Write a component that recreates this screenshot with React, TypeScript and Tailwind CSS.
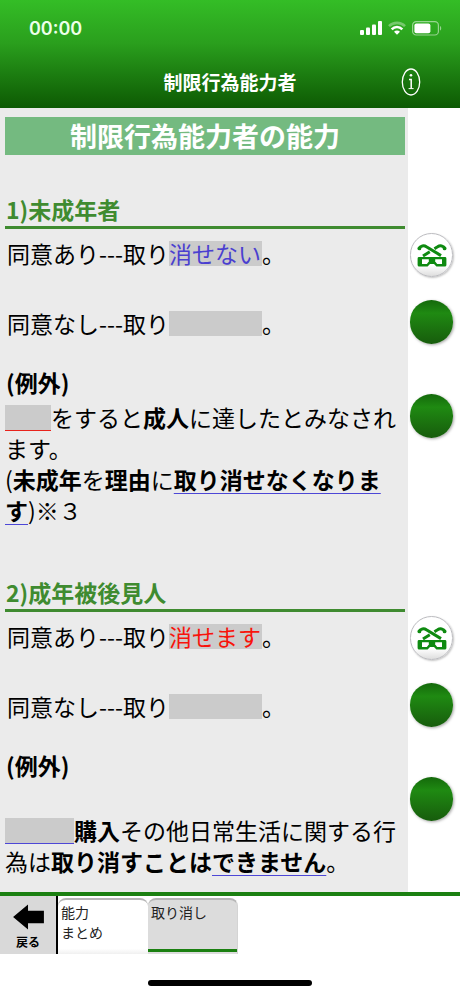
import type { ReactNode } from 'react';
import clsx from 'clsx';

function StatusIcons() {
  return (
    <div className="flex items-center gap-[6px] text-white">
      <svg width="22" height="14" viewBox="0 0 22 14" fill="currentColor">
        <rect x="0" y="9" width="4" height="5" rx="1" />
        <rect x="6" y="6.5" width="4" height="7.5" rx="1" />
        <rect x="12" y="3.5" width="4" height="10.5" rx="1" />
        <rect x="18" y="0" width="4" height="14" rx="1" />
      </svg>
      <svg width="18" height="14" viewBox="0 0 18 14" fill="none" stroke="currentColor" strokeWidth="2.6">
        <path d="M1 5.2C5.4 0.8 12.6 0.8 17 5.2" opacity="0.35" />
        <path d="M3.7 8.3C6.7 5.3 11.3 5.3 14.3 8.3" />
        <path d="M9 13.8L6 10.8C7.8 9.2 10.2 9.2 12 10.8Z" fill="currentColor" stroke="none" />
      </svg>
      <svg width="30" height="15" viewBox="0 0 30 15" fill="none">
        <rect x="0.6" y="0.6" width="25.8" height="13.4" rx="3.6" stroke="currentColor" strokeOpacity="0.5" strokeWidth="1.2" />
        <rect x="2.4" y="2.4" width="16" height="9.8" rx="2" fill="currentColor" />
        <path d="M28 5V9.6C29.6 9 29.6 5.6 28 5Z" fill="currentColor" fillOpacity="0.5" />
      </svg>
    </div>
  );
}

function InfoIcon() {
  return (
    <svg width="20" height="28" viewBox="0 0 20 28" fill="none" stroke="white">
      <ellipse cx="10" cy="14" rx="8.7" ry="13" strokeWidth="1.3" />
      <circle cx="10" cy="7.3" r="1.3" fill="white" stroke="none" />
      <path d="M8 11.6H10.2V20.4" strokeWidth="1.5" />
      <path d="M7.6 20.6H12.6" strokeWidth="1" />
    </svg>
  );
}

function GlassesIcon() {
  return (
    <svg width="30" height="23" viewBox="0 0 30 23" fill="none" stroke="#0e8a10">
      <path d="M2 4.6C3.4 1.6 7 1.2 9.4 2.8L24 11.6" strokeWidth="3" />
      <path d="M28 4.6C26.6 1.6 23 1.2 20.6 2.8L17.4 4.8" strokeWidth="3" />
      <path d="M12.8 7.8L6 12" strokeWidth="3" />
      <circle cx="2.4" cy="4.4" r="1.9" fill="#0e8a10" stroke="none" />
      <circle cx="27.6" cy="4.4" r="1.9" fill="#0e8a10" stroke="none" />
      <path
        d="M2 13H28Q29.4 13 29.4 14.4V21Q29.4 22.6 27.8 22.6H19.4L17 20H13L10.6 22.6H2.2Q0.6 22.6 0.6 21V14.4Q0.6 13 2 13Z"
        fill="#0e8a10"
        stroke="none"
      />
      <path d="M5 15.2H11.8V17.4L9.8 20H5Z" fill="white" stroke="none" />
      <path d="M18.2 15.2H25V20H20.2L18.2 17.4Z" fill="white" stroke="none" />
    </svg>
  );
}

function RoundButton({ open = false, label }: { open?: boolean; label: string }) {
  return (
    <button
      aria-label={label}
      className={clsx(
        'flex h-11 w-[43px] items-center justify-center rounded-full',
        open
          ? 'border border-[#bcbcc0] bg-linear-to-b from-white from-75% to-[#dedede] shadow-[1px_1px_2px_#c4c4c4]'
          : 'bg-linear-to-b from-[#14690b] via-[#1f8a12] via-30% to-[#175c0c] shadow-[1px_1px_3px_#a5a5a5]'
      )}
    >
      {open && <GlassesIcon />}
    </button>
  );
}

// Hidden or revealed answer inside a sentence
function Blank({ className, children = '\u00a0' }: { className?: string; children?: ReactNode }) {
  return (
    <span className={clsx('inline-block bg-[#cbcbcb] leading-[25px]', className)}>
      {children}
    </span>
  );
}

function Underlined({ children }: { children: ReactNode }) {
  return (
    <b className="underline decoration-[#4d47d6] decoration-1 underline-offset-[4px]">{children}</b>
  );
}

interface TopicProps {
  title: string;
  answer: ReactNode;
  className?: string;
  children: ReactNode;
}

function Topic({ title, answer, className, children }: TopicProps) {
  return (
    <section className="grid grid-cols-[1fr_52px]">
      <div className={clsx('bg-[#ebebeb] pr-[3px] pl-[5px]', className)}>
        <h2 className="border-b-[3px] border-[#3f8b30] pb-[4px] pl-px text-[23px] leading-[26px] font-bold text-[#3f8b30]">
          {title}
        </h2>
        <p className="mt-[9px] pl-[2px]">同意あり---取り{answer}。</p>
        <p className="mt-[39px] pl-[2px]">
          同意なし---取り
          <Blank className="w-[93px]" />。
        </p>
        <h3 className="mt-[28px] pl-px font-bold">(例外)</h3>
        {children}
      </div>
      <div className="flex flex-col items-start pt-[37px] pl-[2px]">
        <RoundButton open label="答えを隠す" />
        <div className="mt-[23px]">
          <RoundButton label="答えを見る" />
        </div>
        <div className="mt-[50px]">
          <RoundButton label="例外の答えを見る" />
        </div>
      </div>
    </section>
  );
}

export default function App() {
  return (
    <div className="flex min-h-screen flex-col bg-white font-['Noto_Sans_CJK_JP',sans-serif] text-black">
      <header className="bg-linear-to-b from-[#34bd26] via-[#2a9f1d] via-40% to-[#0d5a04]">
        <div className="flex h-14 items-center justify-between pr-[18px] pl-[29px]">
          <span className="font-['Inter',sans-serif] text-[18px] font-semibold text-[#ecffe9]">00:00</span>
          <StatusIcons />
        </div>
        <div className="grid h-[52px] grid-cols-[1fr_auto_1fr] items-center">
          <h1 className="col-start-2 text-[19px] leading-7 font-bold text-white">制限行為能力者</h1>
          <button aria-label="情報" className="mr-[39px] justify-self-end">
            <InfoIcon />
          </button>
        </div>
      </header>

      <main className="text-[23px] leading-[31px]">
        <div className="grid grid-cols-[1fr_52px]">
          <div className="bg-[#ebebeb] pt-[9px] pr-[3px] pb-[41px] pl-[5px]">
            <p className="bg-[#74ba80] text-center text-[27px] leading-[38px] font-bold text-white">
              制限行為能力者の能力
            </p>
          </div>
        </div>

        <Topic
          title="1)未成年者"
          className="pb-[53px]"
          answer={<Blank className="w-[93px] text-[#4a3fd0]">消せない</Blank>}
        >
          <p className="mt-[4px] pr-[3px]">
            <Blank className="w-[46px] border-b border-[#e8231c]" />
            をすると<b>成人</b>に達したとみなされます。
            <br />(<b>未成年</b>を<b>理由</b>に<Underlined>取り消せなくなります</Underlined>)※３
          </p>
        </Topic>

        <Topic
          title="2)成年被後見人"
          className="pb-[15px]"
          answer={<Blank className="w-[93px] text-[#f8140c]">消せます</Blank>}
        >
          <p className="mt-[34px]">
            <Blank className="w-[69px] border-b border-[#4d47d6]" />
            <b>購入</b>その他日常生活に関する行為は<b>取り消すことは</b>
            <Underlined>できません</Underlined>。
          </p>
        </Topic>
      </main>

      <nav className="flex h-[62px] border-t-4 border-[#1b8011] text-[14px] leading-5 text-[#222]">
        <button className="flex w-[58px] flex-col items-center border-r-2 border-black bg-[#d9d9d9] pt-2 text-black">
          <svg width="33" height="27" viewBox="0 0 33 27">
            <path d="M0.5 13.5L16 0.5V7H32.5V20H16V26.5Z" fill="black" />
          </svg>
          <span className="text-[12px] leading-6 font-bold">戻る</span>
        </button>
        <button className="mt-[2px] flex w-[90px] flex-col items-start rounded-t-lg border-t-2 border-[#b5b5b5] bg-linear-to-b from-white from-90% to-[#f0f0f0] px-[3px] pt-[2px] text-left">
          <span>能力</span>
          <span>まとめ</span>
        </button>
        <button className="mt-[2px] flex w-[90px] flex-col items-start rounded-t-lg border-t-2 border-r border-[#b5b5b5] border-r-[#d4d4d4] bg-[#dcdcdc] pt-[2px] pb-[2px] text-left">
          <span className="px-[3px]">取り消し</span>
          <span className="mt-auto h-[3px] w-full bg-[#1b8011]" />
        </button>
      </nav>

      <footer className="mt-auto flex justify-center pb-[10px]">
        <div className="h-[6px] w-[164px] rounded-full bg-black" />
      </footer>
    </div>
  );
}
